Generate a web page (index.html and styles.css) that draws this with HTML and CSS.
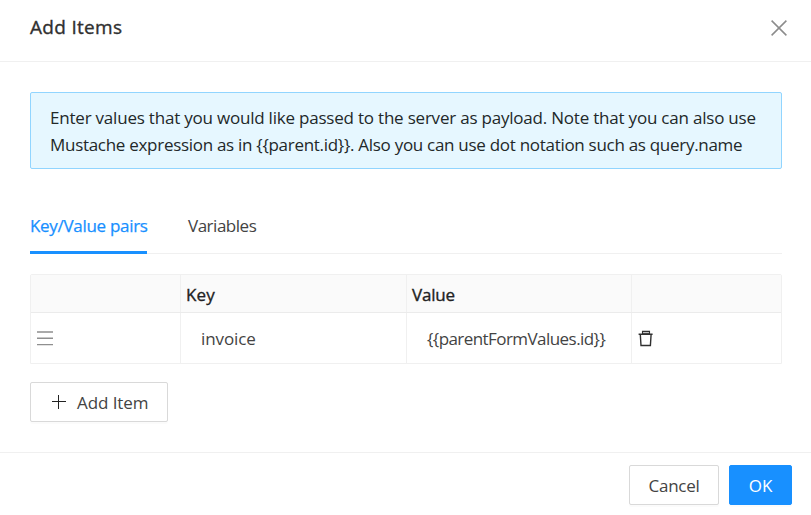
FILE: index.html
```html
<!DOCTYPE html>
<html lang="en">
<head>
<meta charset="utf-8">
<title>Add Items</title>
<link rel="stylesheet" href="styles.css">
</head>
<body>
<div class="modal">
  <header class="modal-header">
    <h1 class="modal-title">Add Items</h1>
    <svg class="close" viewBox="0 0 16 16"><path d="M.6.6l14.8 14.8M15.4.6L.6 15.4"/></svg>
  </header>
  <main class="modal-body">
    <div class="alert">
      <div class="alert-first">Enter values that you would like passed to the server as payload. Note that you can also use</div>
      <div class="alert-second">Mustache expression as in {{parent.id}}. Also you can use dot notation such as query.name</div>
    </div>
    <nav class="tabs">
      <div class="tab tab-active">Key/Value pairs</div>
      <div class="tab tab-variables">Variables</div>
    </nav>
    <div class="table">
      <div class="row row-head">
        <div class="cell"></div>
        <div class="cell head-key">Key</div>
        <div class="cell head-value">Value</div>
        <div class="cell"></div>
      </div>
      <div class="row row-data">
        <div class="cell"><svg class="handle" viewBox="0 0 16 15"><path d="M0 1h16M0 7.3h16M0 13.6h16"/></svg></div>
        <div class="cell cell-text">invoice</div>
        <div class="cell cell-text cell-value">{{parentFormValues.id}}</div>
        <div class="cell"><svg class="trash" viewBox="0 0 16 17"><path class="lid" d="M4.5 1.4h7v2.3h-7z"/><path d="M.6 4.2h14M2.3 4.2l.7 11.3h9.4l.7-11.3"/></svg></div>
      </div>
    </div>
    <button class="btn btn-add"><svg class="plus" viewBox="0 0 14 14"><path d="M6.5 0v14M0 6.5h14"/></svg><span>Add Item</span></button>
  </main>
  <footer class="modal-footer">
    <button class="btn btn-cancel">Cancel</button>
    <button class="btn btn-ok">OK</button>
  </footer>
</div>
</body>
</html>
```
FILE: styles.css
```css
* { box-sizing: border-box; }
body {
  margin: 0;
  background: #fff;
  color: #434343;
  font: 400 17px/27px "Open Sans", sans-serif;
  overflow: hidden;
}
svg { display: block; fill: none; stroke: currentColor; }
.modal { display: flex; flex-direction: column; height: 515px; }
.modal-header {
  display: flex;
  justify-content: space-between;
  align-items: center;
  height: 62px;
  padding: 0 24px 5px 30px;
  border-bottom: 1px solid #f0f0f0;
}
.modal-title {
  margin: 0 0 2px;
  color: #303030;
  font-size: 19px;
  font-weight: 400;
  letter-spacing: 0.3px;
  -webkit-text-stroke: 0.35px #303030;
}
.close { width: 16px; height: 16px; color: #8c8c8c; stroke-width: 1.5; }
.modal-body { height: 390px; padding: 30px 29px 0 30px; }
.alert {
  height: 77px;
  padding: 11px 19px;
  border: 1px solid #91d5ff;
  border-radius: 2px;
  background: #e6f7ff;
  color: #222829;
  white-space: nowrap;
}
.alert-first { letter-spacing: -0.21px; }
.alert-second { letter-spacing: -0.29px; }
.tabs {
  display: flex;
  gap: 41px;
  height: 55px;
  margin-top: 30px;
  border-bottom: 1px solid #f0f0f0;
}
.tab { height: 55px; padding-top: 13px; white-space: nowrap; }
.tab-active {
  width: 117px;
  border-bottom: 3px solid #1890ff;
  color: #1890ff;
  letter-spacing: -0.3px;
  -webkit-text-stroke: 0.25px #1890ff;
}
.tab-variables { letter-spacing: -0.48px; }
.table {
  margin-top: 20px;
  border: 1px solid #f0f0f0;
  border-radius: 2px 2px 0 0;
}
.row { display: grid; grid-template-columns: 150px 226px 225px 149px; }
.row-head {
  height: 38px;
  border-bottom: 1px solid #ebebeb;
  background: #fafafa;
  color: #222;
  -webkit-text-stroke: 0.35px #222;
}
.row-data { height: 50px; }
.cell {
  display: flex;
  align-items: center;
  padding: 1px 5px 0;
  border-right: 1px solid #f0f0f0;
}
.cell:last-child { border-right: 0; padding-left: 6px; }
.head-key { letter-spacing: 0.1px; }
.head-value { letter-spacing: -0.2px; }
.cell-text { padding-left: 20px; letter-spacing: -0.1px; }
.cell-value { letter-spacing: -0.56px; }
.handle { width: 16px; height: 15px; margin-left: 1px; color: #8f8f8f; stroke-width: 1.4; }
.trash { width: 16px; height: 17px; color: #303030; stroke-width: 1.4; }
.lid { fill: #c4c4c4; stroke-width: 1.1; }
.btn {
  display: flex;
  align-items: center;
  justify-content: center;
  height: 40px;
  padding: 0;
  border: 1px solid #d9d9d9;
  border-radius: 2px;
  background: #fff;
  box-shadow: 0 2px 0 rgba(0, 0, 0, 0.015);
  color: #434343;
  font: inherit;
}
.btn-add {
  justify-content: flex-start;
  gap: 11px;
  width: 138px;
  margin-top: 18px;
  padding-left: 21px;
  letter-spacing: -0.08px;
}
.plus { width: 14px; height: 14px; color: #222; stroke-width: 1; }
.modal-footer {
  display: flex;
  justify-content: flex-end;
  gap: 10px;
  height: 63px;
  padding: 12px 19px 0 0;
  border-top: 1px solid #f0f0f0;
}
.btn-cancel { width: 90px; letter-spacing: -0.27px; }
.btn-ok { width: 63px; border-color: #1890ff; background: #1890ff; color: #fff; }
```
